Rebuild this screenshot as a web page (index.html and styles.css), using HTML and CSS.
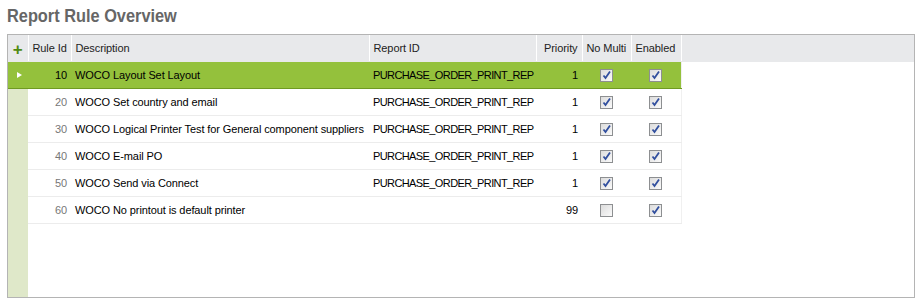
FILE: index.html
```html
<!DOCTYPE html>
<html lang="en">

<head>
    <meta charset="UTF-8">
    <title>Report Rule Overview</title>
    <link rel="stylesheet" href="styles.css">
</head>

<body>
    <h1 class="page-title">Report Rule Overview</h1>
    <div class="grid-panel">
        <table class="rule-table">
            <colgroup>
                <col class="c-gutter">
                <col class="c-id">
                <col class="c-desc">
                <col class="c-report">
                <col class="c-prio">
                <col class="c-multi">
                <col class="c-enabled">
                <col>
            </colgroup>
            <thead>
                <tr>
                    <th class="gutter"><span class="plus">+</span></th>
                    <th class="num">Rule Id</th>
                    <th>Description</th>
                    <th>Report ID</th>
                    <th class="num">Priority</th>
                    <th>No Multi</th>
                    <th>Enabled</th>
                    <th class="filler"></th>
                </tr>
            </thead>
            <tbody>
                <tr class="selected">
                    <td class="gutter"><span class="arrow"></span></td>
                    <td class="num id">10</td>
                    <td>WOCO Layout Set Layout</td>
                    <td class="report">PURCHASE_ORDER_PRINT_REP</td>
                    <td class="num">1</td>
                    <td class="check"><span class="box on"></span></td>
                    <td class="check"><span class="box on"></span></td>
                    <td class="filler"></td>
                </tr>
                <tr>
                    <td class="gutter"></td>
                    <td class="num id">20</td>
                    <td>WOCO Set country and email</td>
                    <td class="report">PURCHASE_ORDER_PRINT_REP</td>
                    <td class="num">1</td>
                    <td class="check"><span class="box on"></span></td>
                    <td class="check"><span class="box on"></span></td>
                    <td class="filler"></td>
                </tr>
                <tr>
                    <td class="gutter"></td>
                    <td class="num id">30</td>
                    <td>WOCO Logical Printer Test for General component suppliers</td>
                    <td class="report">PURCHASE_ORDER_PRINT_REP</td>
                    <td class="num">1</td>
                    <td class="check"><span class="box on"></span></td>
                    <td class="check"><span class="box on"></span></td>
                    <td class="filler"></td>
                </tr>
                <tr>
                    <td class="gutter"></td>
                    <td class="num id">40</td>
                    <td>WOCO E-mail PO</td>
                    <td class="report">PURCHASE_ORDER_PRINT_REP</td>
                    <td class="num">1</td>
                    <td class="check"><span class="box on"></span></td>
                    <td class="check"><span class="box on"></span></td>
                    <td class="filler"></td>
                </tr>
                <tr>
                    <td class="gutter"></td>
                    <td class="num id">50</td>
                    <td>WOCO Send via Connect</td>
                    <td class="report">PURCHASE_ORDER_PRINT_REP</td>
                    <td class="num">1</td>
                    <td class="check"><span class="box on"></span></td>
                    <td class="check"><span class="box on"></span></td>
                    <td class="filler"></td>
                </tr>
                <tr>
                    <td class="gutter"></td>
                    <td class="num id">60</td>
                    <td>WOCO No printout is default printer</td>
                    <td class="report"></td>
                    <td class="num">99</td>
                    <td class="check"><span class="box"></span></td>
                    <td class="check"><span class="box on"></span></td>
                    <td class="filler"></td>
                </tr>
            </tbody>
        </table>
    </div>
</body>

</html>
```

FILE: styles.css
```css
body {
    font-family: 'Liberation Sans', Arial, sans-serif;
    margin: 0;
    padding: 0 6px 0 7px;
    background-color: #fff;
    color: #000;
}

.page-title {
    font-family: 'Liberation Sans', Arial, sans-serif;
    font-size: 19px;
    font-weight: bold;
    color: #666;
    margin: 0;
    padding: 5px 0 0 0;
    height: 29px;
    line-height: 22px;
    white-space: nowrap;
    transform: scaleX(0.86);
    transform-origin: left center;
}

.grid-panel {
    height: 262px;
    border: 1px solid #b4b4b4;
    background: linear-gradient(to right, #dfe8c9 20px, #fff 20px);
}

.rule-table {
    width: 100%;
    border-collapse: collapse;
    table-layout: fixed;
    font-size: 11px;
    letter-spacing: -0.1px;
}

.c-gutter { width: 20px; }
.c-id { width: 43px; }
.c-desc { width: 298px; }
.c-report { width: 167px; }
.c-prio { width: 46px; }
.c-multi { width: 49px; }
.c-enabled { width: 50px; }

.rule-table th {
    height: 26px;
    padding: 0 4px;
    background-color: #e8e9eb;
    border-left: 1px solid #fff;
    font-weight: normal;
    color: #222;
    text-align: left;
    white-space: nowrap;
    border-bottom: 1px solid #e8e9eb;
}

.rule-table th.gutter {
    border-left: none;
}

.rule-table td {
    height: 26px;
    padding: 0 4px;
    border-bottom: 1px solid #ececec;
    white-space: nowrap;
    overflow: hidden;
}

.rule-table td.report {
    letter-spacing: -0.6px;
}

.rule-table td.gutter {
    border-bottom: none;
    padding: 0;
}

.rule-table td.filler {
    border-bottom: none;
    border-left: 1px solid #f0f0f0;
    background-color: #fff;
}

.rule-table .num {
    text-align: right;
}

.rule-table td.id {
    color: #777;
}

.rule-table .check {
    text-align: center;
    padding: 0;
}

.plus {
    display: block;
    color: #4f8a10;
    font-weight: bold;
    font-size: 17px;
    text-align: center;
    line-height: 14px;
    padding-top: 3px;
}

.selected td {
    background-color: #94c13c;
    border-bottom: 1px solid #6f9a22;
}

.selected td.id {
    color: #000;
}

.selected td.gutter {
    border-bottom: 1px solid #6f9a22;
}

.selected td.filler {
    background-color: #fff;
    border-bottom: none;
}

.arrow {
    display: block;
    width: 0;
    height: 0;
    margin-left: 9px;
    border-top: 3px solid transparent;
    border-bottom: 3px solid transparent;
    border-left: 5px solid #fff;
}

.box {
    display: inline-block;
    width: 11px;
    height: 11px;
    vertical-align: middle;
    border: 1px solid #8d8f91;
    background: linear-gradient(135deg, #dcdcdc, #fafafa);
}

.box.on {
    background:
        url("data:image/svg+xml,%3Csvg xmlns='http://www.w3.org/2000/svg' width='11' height='11'%3E%3Cpath d='M2.5 5.5 L4.5 8 L9 1.5' fill='none' stroke='%23314f9e' stroke-width='1.8'/%3E%3C/svg%3E") no-repeat center,
        linear-gradient(135deg, #dcdcdc, #fafafa);
}
```
